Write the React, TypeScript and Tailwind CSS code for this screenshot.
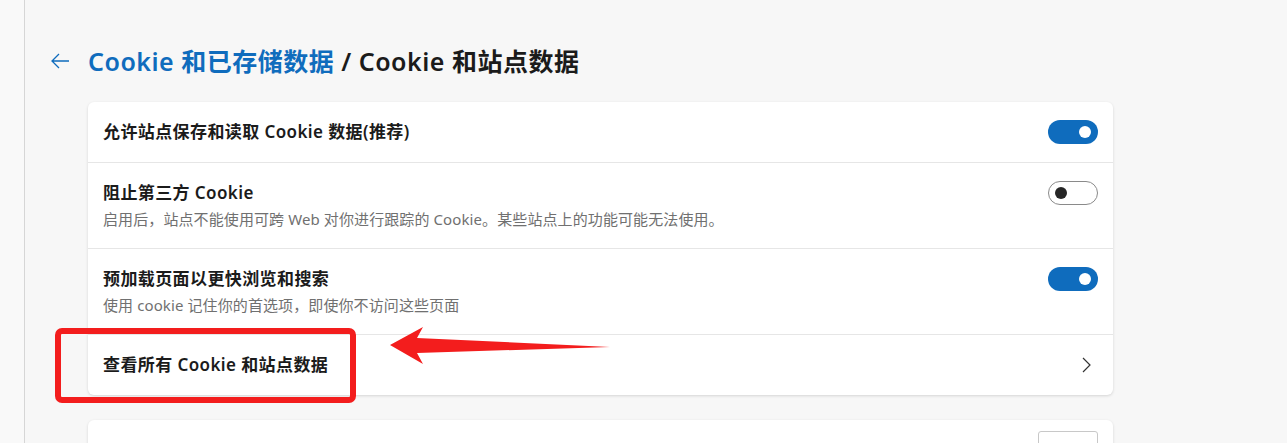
import React from "react";

const font = {
  fontFamily: '"Noto Sans", "Noto Sans CJK SC", sans-serif',
};

const Toggle = ({ on }: { on: boolean }) =>
  on ? (
    <div className="w-[50px] h-[24px] rounded-full bg-[#0f6cbd] flex items-center justify-end pr-[7px]">
      <div className="w-[12px] h-[12px] rounded-full bg-white" />
    </div>
  ) : (
    <div className="w-[50px] h-[24px] rounded-full border border-[#8a8a8a] bg-white flex items-center pl-[6px]">
      <div className="w-[12px] h-[12px] rounded-full bg-[#262626]" />
    </div>
  );

const Row = ({
  title,
  desc,
  right,
  h,
  last,
}: {
  title: string;
  desc?: string;
  right: React.ReactNode;
  h: string;
  last?: boolean;
}) => (
  <div
    className={`flex items-center justify-between px-[15px] ${h} ${
      last ? "" : "border-b border-[#e6e6e6]"
    }`}
  >
    <div className="flex flex-col">
      <div className="text-[17px] leading-[22px] tracking-[0.4px] font-semibold text-[#1b1b1b]">
        {title}
      </div>
      {desc && (
        <div className="text-[15px] leading-[20px] tracking-[0.1px] text-[#707070] mt-[5px]">
          {desc}
        </div>
      )}
    </div>
    {right}
  </div>
);

export default function App() {
  return (
    <div className="relative h-[443px] overflow-hidden bg-[#f7f7f7] flex" style={font}>
      {/* side rail */}
      <div className="w-[25px] shrink-0 border-r border-[#d6d6d6] bg-[#f9f9f9]" />

      <div className="flex-1 pl-[25px] pt-[45px]">
        {/* heading */}
        <div className="flex items-center h-[32px]">
          <svg width="20" height="20" viewBox="0 0 20 20" className="mr-[18px]">
            <path
              d="M19 10H2M9 3L2 10l7 7"
              fill="none"
              stroke="#0f6cbd"
              strokeWidth="1.3"
            />
          </svg>
          <div className="text-[25px] leading-[32px] tracking-[0.5px] font-semibold text-[#1b1b1b]">
            <span className="text-[#0f6cbd]">Cookie 和已存储数据</span> / Cookie 和站点数据
          </div>
        </div>

        {/* main card */}
        <div className="ml-[38px] mt-[25px] w-[1025px] bg-white rounded-[6px] shadow-[0_1px_3px_rgba(0,0,0,0.14)]">
          <Row h="h-[61px]" title="允许站点保存和读取 Cookie 数据(推荐)" right={<Toggle on />} />
          <Row
            h="h-[86px]"
            title="阻止第三方 Cookie"
            desc="启用后，站点不能使用可跨 Web 对你进行跟踪的 Cookie。某些站点上的功能可能无法使用。"
            right={
              <div className="self-start mt-[18px]">
                <Toggle on={false} />
              </div>
            }
          />
          <Row
            h="h-[86px]"
            title="预加载页面以更快浏览和搜索"
            desc="使用 cookie 记住你的首选项，即使你不访问这些页面"
            right={
              <div className="self-start mt-[18px]">
                <Toggle on />
              </div>
            }
          />
          <Row
            h="h-[60px]"
            last
            title="查看所有 Cookie 和站点数据"
            right={
              <svg width="16" height="16" viewBox="0 0 16 16" className="mr-[4px]">
                <path d="M5 1l7 7-7 7" fill="none" stroke="#333" strokeWidth="1.2" />
              </svg>
            }
          />
        </div>

        {/* next card */}
        <div className="ml-[38px] mt-[25px] w-[1025px] h-[60px] bg-white rounded-[6px] shadow-[0_1px_3px_rgba(0,0,0,0.14)] flex justify-end pr-[15px] pt-[11px]">
          <div className="w-[60px] h-[40px] border border-[#c8c8c8] rounded-[3px] bg-white" />
        </div>
      </div>

      {/* annotation: red frame */}
      <div className="absolute left-[55px] top-[328px] w-[301px] h-[75px] border-[6px] border-[#f31d1d] rounded-[7px]" />

      {/* annotation: red arrow */}
      <svg
        className="absolute left-0 top-0 pointer-events-none"
        width="1287"
        height="443"
        viewBox="0 0 1287 443"
      >
        <polygon
          points="390,345 423,327 417,338 610,347 417,353 423,364"
          fill="#f31d1d"
        />
      </svg>
    </div>
  );
}
